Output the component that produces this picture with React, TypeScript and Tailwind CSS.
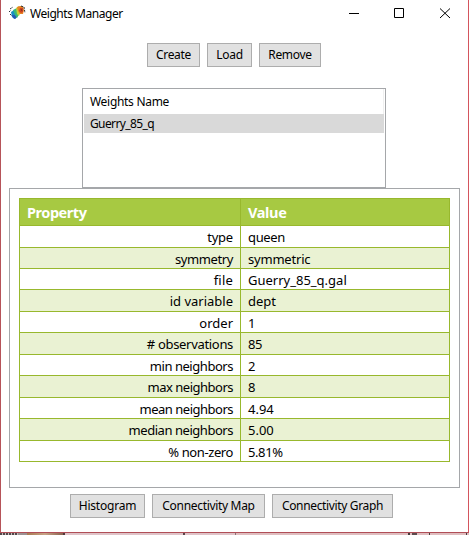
type Row = { name: string; value: string; h: string; nameFit: string; valueFit: string };

const rows: Row[] = [
  { name: 'type', value: 'queen', h: 'h-[22px]', nameFit: 'tracking-[-0.2px]', valueFit: 'tracking-[-0.35px]' },
  { name: 'symmetry', value: 'symmetric', h: 'h-[21px]', nameFit: 'tracking-[-0.4px]', valueFit: 'tracking-[-0.2px]' },
  { name: 'file', value: 'Guerry_85_q.gal', h: 'h-[21px]', nameFit: 'tracking-[0.2px]', valueFit: '' },
  { name: 'id variable', value: 'dept', h: 'h-[22px]', nameFit: '', valueFit: '' },
  { name: 'order', value: '1', h: 'h-[21px]', nameFit: '', valueFit: '' },
  { name: '# observations', value: '85', h: 'h-[22px]', nameFit: 'tracking-[-0.32px]', valueFit: 'tracking-[-0.4px]' },
  { name: 'min neighbors', value: '2', h: 'h-[21px]', nameFit: 'tracking-[-0.46px]', valueFit: '' },
  { name: 'max neighbors', value: '8', h: 'h-[22px]', nameFit: 'tracking-[-0.5px]', valueFit: '' },
  { name: 'mean neighbors', value: '4.94', h: 'h-[21px]', nameFit: 'tracking-[-0.5px]', valueFit: '' },
  { name: 'median neighbors', value: '5.00', h: 'h-[22px]', nameFit: 'tracking-[-0.46px]', valueFit: '' },
  { name: '% non-zero', value: '5.81%', h: 'h-[21px]', nameFit: 'tracking-[-0.4px]', valueFit: 'tracking-[-0.4px]' },
];

function Button({ label, width, fit = '' }: { label: string; width: string; fit?: string }) {
  return (
    <button className={`flex h-6 items-center justify-center border border-[#adadad] bg-[#e1e1e1] whitespace-nowrap ${width}`}>
      <span className={fit}>{label}</span>
    </button>
  );
}

function AppIcon() {
  return (
    <svg width="17" height="15" viewBox="0 0 17 15" aria-hidden="true">
      <path d="M2 7 5 5 8 8 8 12 6 14 3 12Z" fill="#168fc4" />
      <path d="M3 10 6 10 8 12 6 14 4 13Z" fill="#2459b5" />
      <path d="M4 5 8 3 11 8 8 13 6 10Z" fill="#39b878" />
      <path d="M7 3 10 1 12 6 10 11 8 9Z" fill="#c5cf35" />
      <path d="M8 2 11 1 14 1 15 5 14 9 11 9 9 6Z" fill="#e98222" />
      <path d="M11 3 14 3 14 7 12 8 10 6Z" fill="#cf4420" />
      <path d="M1 4 4 2M0 7 2 5M12 1 15 2 16 8M1 9 3 11" fill="none" stroke="#27303a" strokeWidth="1" strokeDasharray="2 1" />
      <path d="M12 4 13 6" fill="none" stroke="#7b3025" strokeWidth="1" />
    </svg>
  );
}

export default function App() {
  return (
    <div className="flex h-[535px] w-[469px] flex-col overflow-hidden bg-white font-['Noto_Sans','Open_Sans',sans-serif] text-[12px] text-black">
      <main className="flex h-[533px] flex-col border-x border-b border-l-[#b65359] border-r-[#d4555d] border-b-[#b14e57]">
        <header className="flex h-[27px] items-center">
          <div className="ml-2 flex h-full pt-[5px]"><AppIcon /></div>
          <h1 className="ml-1 w-[311px] text-[12px] leading-4 tracking-[-0.46px] whitespace-nowrap">Weights Manager</h1>
          <svg className="shrink-0" width="120" height="27" viewBox="340 0 120 27" fill="none" stroke="#000" aria-hidden="true">
            <path d="M348 13.5H358M393.5 8.5H402.5V17.5H393.5ZM439 8.5 449 18M449 8.5 439 18" />
          </svg>
        </header>
        <div className="mt-4 ml-[146px] flex gap-[7px]">
          <Button label="Create" width="w-[53px]" fit="tracking-[-0.3px]" />
          <Button label="Load" width="w-[45px]" fit="tracking-[-0.3px]" />
          <Button label="Remove" width="w-[62px]" fit="tracking-[-0.3px]" />
        </div>
        <section className="mt-[21px] ml-[81px] h-[100px] w-[304px] shrink-0 border border-[#a5a7aa] px-px">
          <div className="flex h-[25px] items-center border-r border-[#f0f0f0] pt-px pl-[6px]"><span className="tracking-[-0.3px]">Weights Name</span></div>
          <div className="flex h-[19px] items-center bg-[#d9d9d9] pt-px pl-[6px]"><span className="tracking-[-0.62px]">Guerry_85_q</span></div>
        </section>
        <section className="ml-2 h-[300px] w-[451px] shrink-0 border border-[#a5a7aa] pt-[9px] pl-[9px]">
          <div className="w-[431px] border border-b-0 border-[#98b82d] text-[13px]">
            <div className="grid h-[27px] grid-cols-[221px_208px] border-b border-[#98b82d] bg-[#a7c942] text-[14.5px] font-bold text-white">
              <div className="flex items-center border-r border-[#98b82d] pt-px pl-[7px]"><span className="tracking-[-0.45px]">Property</span></div>
              <div className="flex items-center pt-px pl-[7px]"><span className="tracking-[-0.35px]">Value</span></div>
            </div>
            {rows.map((row, i) => (
              <div key={row.name} className={`grid grid-cols-[221px_208px] border-b border-[#98b82d] leading-[18px] whitespace-nowrap ${row.h} ${i % 2 ? 'bg-[#eaf2d3]' : 'bg-white'}`}>
                <div className="flex items-start justify-end border-r border-[#98b82d] pt-[2px] pr-[7px]"><span className={row.nameFit}>{row.name}</span></div>
                <div className="flex items-start pt-[2px] pl-[7px]"><span className={row.valueFit}>{row.value}</span></div>
              </div>
            ))}
          </div>
        </section>
        <div className="mt-[6px] ml-[69px] flex gap-[7px]">
          <Button label="Histogram" width="w-[75px]" fit="tracking-[-0.2px]" />
          <Button label="Connectivity Map" width="w-[113px]" fit="tracking-[-0.32px]" />
          <Button label="Connectivity Graph" width="w-[121px]" fit="tracking-[-0.35px]" />
        </div>
      </main>
      <footer className="flex h-[2px]">
        <div className="w-[18px] bg-[repeating-linear-gradient(90deg,#51484a_0_2px,#c5bbbb_2px_3px)]" />
        <div className="w-[9px] bg-[#9b9293]" />
        <div className="w-[36px] bg-linear-to-r from-[#a87a52] via-[#c7a386] to-[#8a6350]" />
        <div className="w-[2px] bg-[#503b3c]" />
        <div className="w-[118px] bg-[#dfc3c8]" />
        <div className="w-[2px] bg-[#59464a]" />
        <div className="w-[50px] bg-[#dfc3c8]" />
        <div className="w-px bg-[#8e7377]" />
        <div className="w-[172px] bg-[#dfbdbf]" />
        <div className="w-[2px] bg-[#443b3c]" />
        <div className="w-[2px] bg-[#dfbdbf]" />
        <div className="w-[5px] bg-[#5c4c4e]" />
        <div className="w-[12px] bg-[#dfbdbf]" />
        <div className="w-px bg-[#443b3c]" />
        <div className="w-[36px] bg-[#dfbdbf]" />
        <div className="w-px bg-[#443b3c]" />
        <div className="flex-1 bg-[#dfbdbf]" />
      </footer>
    </div>
  );
}
